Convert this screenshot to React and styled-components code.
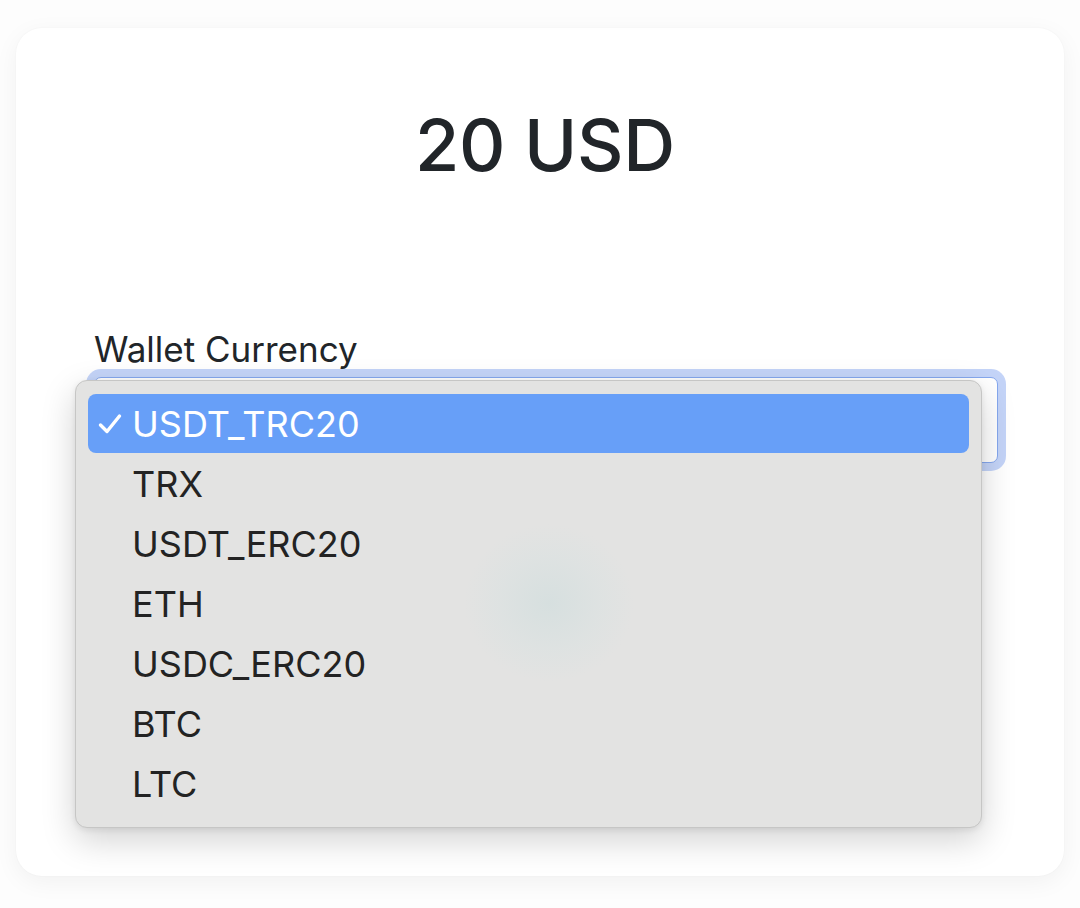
import styled, { createGlobalStyle } from "styled-components";

const GlobalStyle = createGlobalStyle`
    html, body {
        margin: 0;
        padding: 0;
        background: #fdfdfd;
    }
    body {
        font-family: Inter, "Noto Sans", sans-serif;
        color: #212529;
    }
`;

const Page = styled.div`
    padding: 28px 16px 32px 16px;
`;

const Card = styled.div`
    position: relative;
    height: 848px;
    box-sizing: border-box;
    background: #ffffff;
    border-radius: 26px;
    box-shadow: 0 6px 24px rgba(0, 0, 0, 0.05), 0 0 2px rgba(0, 0, 0, 0.04);
    padding: 72px 66px 0 66px;
`;

const Title = styled.h1`
    margin: 0;
    padding-left: 10px;
    text-align: center;
    font-size: 72px;
    font-weight: 500;
    line-height: 90px;
    letter-spacing: -0.3px;
    color: #212529;
`;

const Field = styled.div`
    margin-top: 139px;
    padding-left: 12px;
`;

const Label = styled.label`
    display: block;
    font-size: 35px;
    line-height: 40px;
    color: #212529;
    margin-bottom: 8px;
`;

const SelectBox = styled.div`
    height: 86px;
    box-sizing: border-box;
    border: 1px solid #86a8ee;
    border-radius: 7px;
    background: #fff;
    box-shadow: 0 0 0 8px rgba(86, 131, 235, 0.35);
`;

const Menu = styled.ul`
    position: absolute;
    left: 59px;
    top: 352px;
    width: 907px;
    height: 448px;
    box-sizing: border-box;
    margin: 0;
    padding: 13px 12px 0 12px;
    list-style: none;
    display: flex;
    flex-direction: column;
    gap: 1px;
    background: #e3e3e2;
    border: 1px solid #c6c6c5;
    border-radius: 12px;
    box-shadow: 0 12px 34px rgba(0, 0, 0, 0.18), 0 2px 6px rgba(0, 0, 0, 0.08);
    overflow: hidden;
`;

const Glow = styled.span`
    position: absolute;
    left: 388px;
    top: 143px;
    width: 170px;
    height: 158px;
    border-radius: 50%;
    background: radial-gradient(closest-side, rgba(210, 222, 222, 0.75), rgba(215, 225, 225, 0.4) 60%, rgba(227, 227, 226, 0));
    pointer-events: none;
`;

const Option = styled.li`
    display: flex;
    align-items: center;
    gap: 10px;
    height: 59px;
    flex-shrink: 0;
    padding-left: 10px;
    border-radius: 8px;
    font-size: 36px;
    color: ${(p) => (p.selected ? "#ffffff" : "#232323")};
    background: ${(p) => (p.selected ? "#679ff8" : "transparent")};
`;

const CheckSlot = styled.span`
    display: flex;
    width: 24px;
    height: 22px;
`;

const options = ["USDT_TRC20", "TRX", "USDT_ERC20", "ETH", "USDC_ERC20", "BTC", "LTC"];

export default function App() {
    return (
        <Page>
            <GlobalStyle />
            <Card>
                <Title>20 USD</Title>
                <Field>
                    <Label>Wallet Currency</Label>
                    <SelectBox />
                </Field>
                <Menu>
                    <Glow />
                    {options.map((o, i) => (
                        <Option key={o} selected={i === 0}>
                            <CheckSlot>
                                {i === 0 && (
                                    <svg width="24" height="22" viewBox="0 0 24 22">
                                        <path
                                            d="M2.5 12 L9 18.5 L21.5 3"
                                            fill="none"
                                            stroke="#fff"
                                            strokeWidth="3.4"
                                            strokeLinecap="round"
                                            strokeLinejoin="round"
                                        />
                                    </svg>
                                )}
                            </CheckSlot>
                            {o}
                        </Option>
                    ))}
                </Menu>
            </Card>
        </Page>
    );
}
